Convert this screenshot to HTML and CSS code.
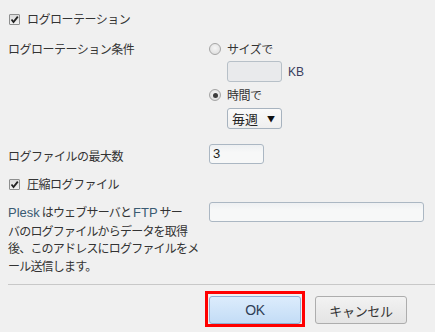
FILE: index.html
```html
<!DOCTYPE html>
<html lang="ja">
<head>
<meta charset="utf-8">
<title>ログローテーション</title>
<link rel="stylesheet" href="styles.css">
</head>
<body>
<div class="form">
  <div class="check-row r1">
    <span class="cb"><svg viewBox="0 0 11 11" width="11" height="11"><path d="M2.5 5.5 L4.5 8 L8.8 2.6" fill="none" stroke="#222" stroke-width="1.8"/></svg></span>
    <span class="txt">ログローテーション</span>
  </div>
  <div class="row r2">
    <div class="label">ログローテーション条件</div>
    <div class="field">
      <div class="radio-row"><span class="radio"></span><span class="txt">サイズで</span></div>
      <div class="kb-line"><span class="input small"></span><span class="unit">KB</span></div>
      <div class="radio-row gap"><span class="radio on"><span class="dot"></span></span><span class="txt">時間で</span></div>
      <div class="select"><span class="sel-text">毎週</span><span class="arrow">▼</span></div>
    </div>
  </div>
  <div class="row r3">
    <div class="label pad">ログファイルの最大数</div>
    <div class="field"><span class="input small val">3</span></div>
  </div>
  <div class="check-row r4">
    <span class="cb"><svg viewBox="0 0 11 11" width="11" height="11"><path d="M2.5 5.5 L4.5 8 L8.8 2.6" fill="none" stroke="#222" stroke-width="1.8"/></svg></span>
    <span class="txt">圧縮ログファイル</span>
  </div>
  <div class="row r5">
    <div class="label desc"><span class="line"><span class="lat">Plesk</span> はウェブサーバと <span class="lat">FTP</span> サー</span><span class="line">バのログファイルからデータを取得</span><span class="line">後、このアドレスにログファイルをメ</span><span class="line">ール送信します。</span></div>
    <div class="field"><span class="input wide"></span></div>
  </div>
</div>
<div class="footer">
  <span class="highlight"><button class="btn ok">OK</button></span>
  <button class="btn cancel">キャンセル</button>
</div>
</body>
</html>
```

FILE: styles.css
```css
html, body {
  margin: 0;
  padding: 0;
  background: #f0f0f0;
  width: 435px;
  height: 332px;
  overflow: hidden;
}
body {
  font-family: "Noto Sans CJK JP", "Noto Sans", sans-serif;
  font-size: 12px;
  color: #333;
  letter-spacing: -0.5px;
}
.form {
  padding: 10px 0 0 8px;
  height: 274px;
  box-sizing: border-box;
}
.check-row {
  display: flex;
  align-items: center;
  height: 18px;
  line-height: 18px;
}
.cb {
  width: 11px;
  height: 11px;
  box-sizing: border-box;
  border: 1px solid #8e8f8f;
  border-radius: 1px;
  background: linear-gradient(#dcdcdc, #f2f2f2);
  margin-left: 1px;
  margin-right: 7px;
  display: flex;
  align-items: center;
  justify-content: center;
  overflow: hidden;
}
.cb svg { display: block; margin: -1px; flex: none; }
.row {
  display: grid;
  grid-template-columns: 201px 1fr;
}
.label { line-height: 18px; }
.r2 { margin-top: 12px; }
.r3 { margin-top: 15px; }
.r4 { margin-top: 10px; }
.r5 { margin-top: 9px; }
.label.pad { padding-top: 3px; }
.radio-row {
  display: flex;
  align-items: center;
  height: 18px;
  line-height: 18px;
}
.radio-row.gap { margin-top: 4px; }
.radio {
  width: 12px;
  height: 12px;
  box-sizing: border-box;
  border-radius: 50%;
  border: 1px solid #a5a5a5;
  background: radial-gradient(circle at 50% 40%, #f6f6f6, #d9d9d9);
  margin-right: 6px;
  display: flex;
  align-items: center;
  justify-content: center;
}
.radio .dot {
  width: 5px;
  height: 5px;
  border-radius: 50%;
  background: #3c3c3c;
}
.kb-line {
  display: flex;
  align-items: center;
  margin-top: 3px;
  margin-left: 18px;
}
.input {
  display: block;
  box-sizing: border-box;
  border: 1px solid #abb7c3;
  border-radius: 3px;
  background: linear-gradient(#eef0f2, #f7f8f8 40%);
}
.input.small { width: 55px; height: 21px; }
.kb-line .input { background: #e9eaec; border-color: #b7c0c8; }
.unit {
  margin-left: 6px;
  font-family: "Liberation Sans", sans-serif;
  letter-spacing: 0;
  font-size: 12px;
  color: #3b3f5e;
}
.input.val {
  height: 20px;
  line-height: 18px;
  padding-left: 3px;
  font-family: "Liberation Sans", sans-serif;
  letter-spacing: 0;
  font-size: 13px;
  color: #222;
}
.input.wide { width: 215px; height: 20px; }
.select {
  display: flex;
  align-items: center;
  justify-content: space-between;
  box-sizing: border-box;
  width: 55px;
  height: 21px;
  margin-top: 4px;
  margin-left: 18px;
  padding: 0 6px 0 4px;
  border: 1px solid #a7b3bf;
  border-radius: 3px;
  background: linear-gradient(#fafafa, #efefef);
  font-size: 13px;
  letter-spacing: 0;
  color: #222;
}
.arrow { font-size: 8px; color: #111; }
.desc {
  line-height: 17.5px;
  padding-top: 1px;
  letter-spacing: -0.8px;
}
.desc .line { display: block; white-space: nowrap; }
.lat {
  font-family: "Liberation Sans", sans-serif;
  letter-spacing: 0;
  font-size: 13px;
  color: #3a5a72;
}
.footer {
  margin-left: 8px;
  border-top: 1px solid #c8c8c8;
  height: 48px;
  box-sizing: border-box;
  display: flex;
  justify-content: flex-end;
  align-items: flex-start;
  gap: 10px;
  padding: 6px 28px 0 0;
  margin-top: 10px;
}
.highlight {
  display: block;
  border: 3px solid #ff0000;
  padding: 2px 1px 0 1px;
}
.btn {
  display: block;
  width: 92px;
  height: 28px;
  box-sizing: border-box;
  border-radius: 3px;
  font-family: "Noto Sans CJK JP", "Noto Sans", sans-serif;
  font-size: 13px;
  letter-spacing: -0.3px;
  color: #333;
  padding: 0;
}
.ok {
  border: 1px solid #8eafd4;
  background: linear-gradient(#dcecfc, #c3dcf6);
  font-family: "Liberation Sans", sans-serif;
  color: #2f3e56;
  font-size: 14px;
}
.cancel {
  margin-top: 5px;
  border: 1px solid #adadad;
  background: linear-gradient(#f2f2f2, #e4e4e4);
}
```
